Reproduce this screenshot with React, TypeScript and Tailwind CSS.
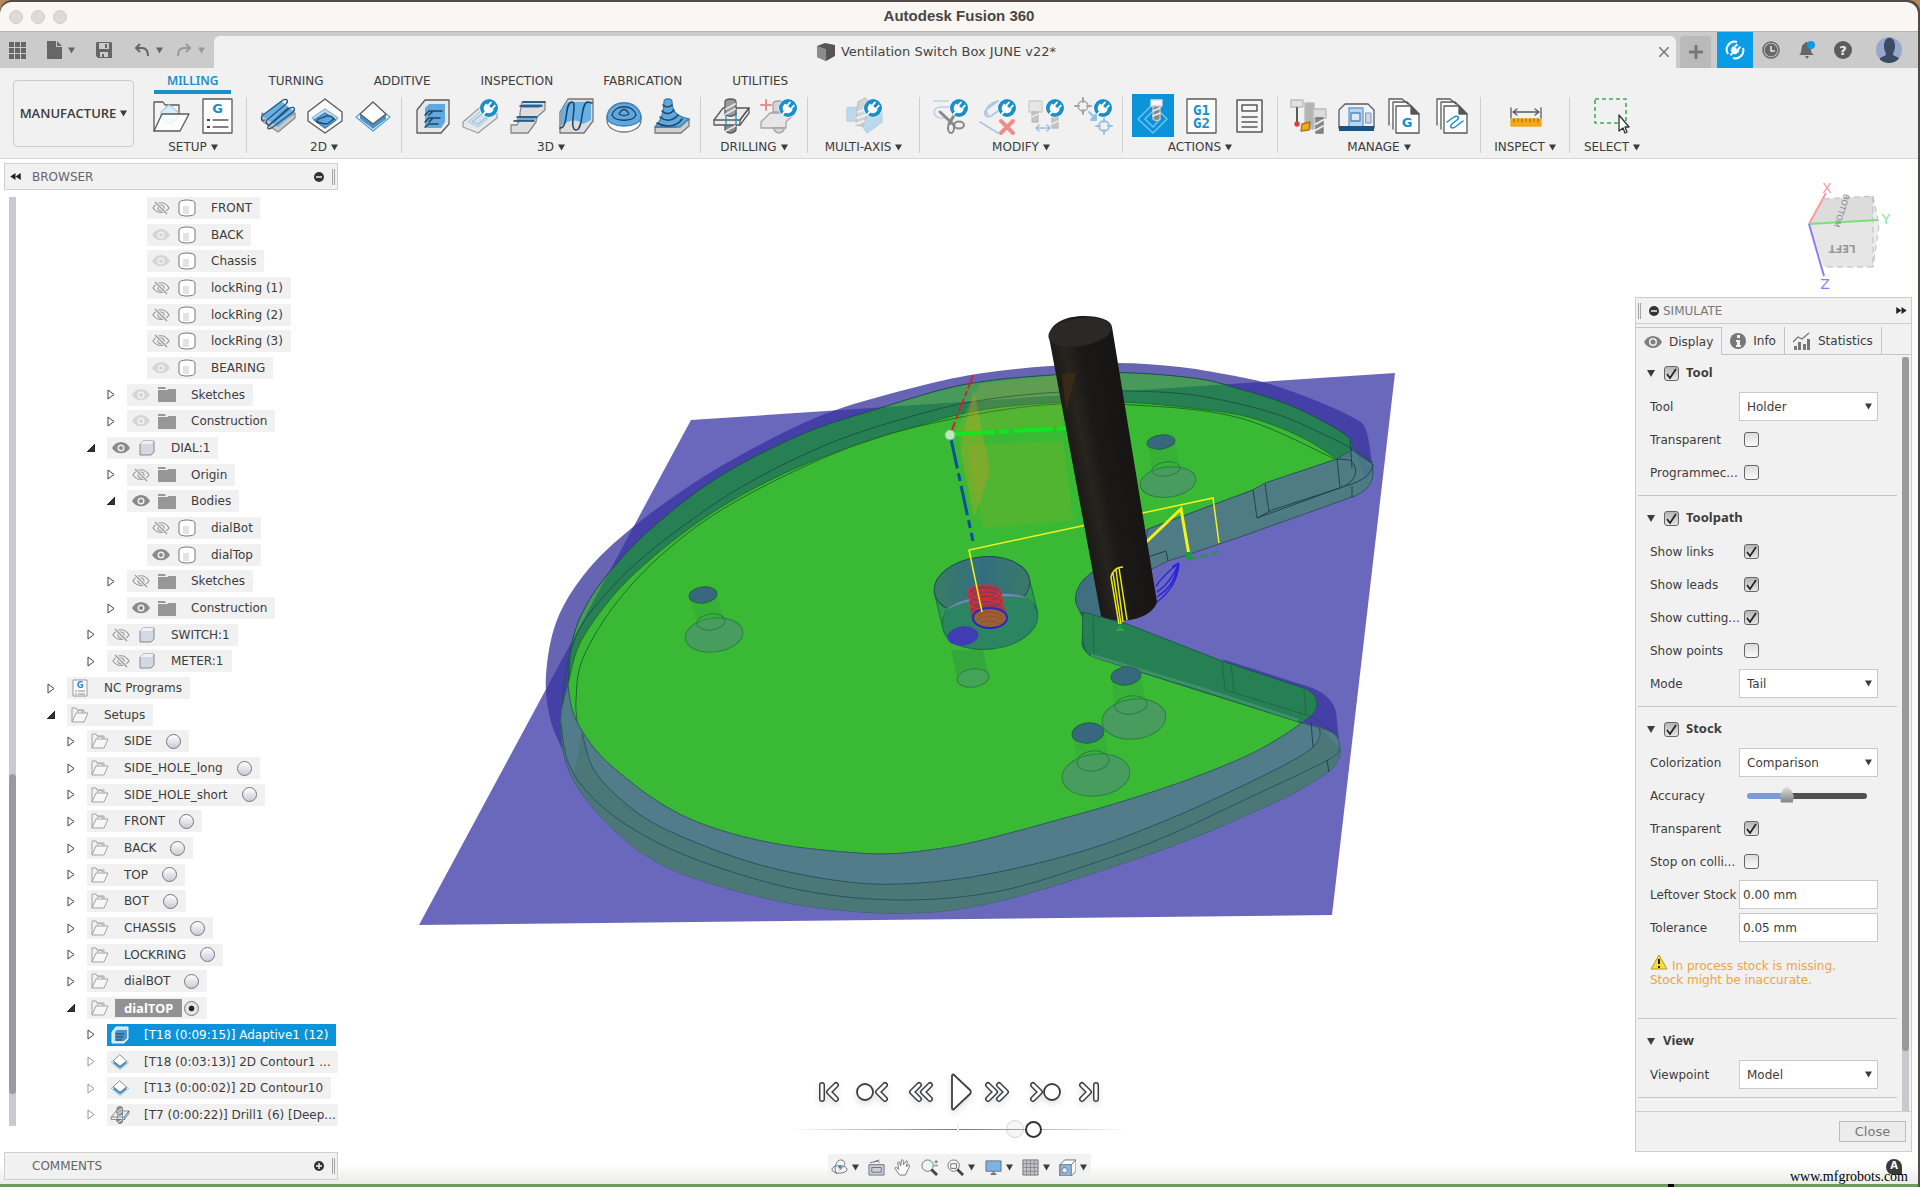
import React, { FC, ReactNode, useState } from "react";
import clsx from "clsx";

type EyeState = "on" | "dim" | "off";
type NodeIcon = "body" | "folder" | "component" | "nc" | "setup" | "adaptive" | "contour" | "drill";

interface TreeNode {
  label: string;
  level: number;
  icon: NodeIcon;
  arrow?: "open" | "closed" | "faint";
  eye?: EyeState;
  radio?: boolean;
  active?: boolean;
  selected?: boolean;
}

const treeNodes: TreeNode[] = [
  { label: "FRONT", level: 4, icon: "body", eye: "off" },
  { label: "BACK", level: 4, icon: "body", eye: "dim" },
  { label: "Chassis", level: 4, icon: "body", eye: "dim" },
  { label: "lockRing (1)", level: 4, icon: "body", eye: "off" },
  { label: "lockRing (2)", level: 4, icon: "body", eye: "off" },
  { label: "lockRing (3)", level: 4, icon: "body", eye: "off" },
  { label: "BEARING", level: 4, icon: "body", eye: "dim" },
  { label: "Sketches", level: 3, icon: "folder", eye: "dim", arrow: "closed" },
  { label: "Construction", level: 3, icon: "folder", eye: "dim", arrow: "closed" },
  { label: "DIAL:1", level: 2, icon: "component", eye: "on", arrow: "open" },
  { label: "Origin", level: 3, icon: "folder", eye: "off", arrow: "closed" },
  { label: "Bodies", level: 3, icon: "folder", eye: "on", arrow: "open" },
  { label: "dialBot", level: 4, icon: "body", eye: "off" },
  { label: "dialTop", level: 4, icon: "body", eye: "on" },
  { label: "Sketches", level: 3, icon: "folder", eye: "off", arrow: "closed" },
  { label: "Construction", level: 3, icon: "folder", eye: "on", arrow: "closed" },
  { label: "SWITCH:1", level: 2, icon: "component", eye: "off", arrow: "closed" },
  { label: "METER:1", level: 2, icon: "component", eye: "off", arrow: "closed" },
  { label: "NC Programs", level: 0, icon: "nc", arrow: "closed" },
  { label: "Setups", level: 0, icon: "setup", arrow: "open" },
  { label: "SIDE", level: 1, icon: "setup", arrow: "closed", radio: true },
  { label: "SIDE_HOLE_long", level: 1, icon: "setup", arrow: "closed", radio: true },
  { label: "SIDE_HOLE_short", level: 1, icon: "setup", arrow: "closed", radio: true },
  { label: "FRONT", level: 1, icon: "setup", arrow: "closed", radio: true },
  { label: "BACK", level: 1, icon: "setup", arrow: "closed", radio: true },
  { label: "TOP", level: 1, icon: "setup", arrow: "closed", radio: true },
  { label: "BOT", level: 1, icon: "setup", arrow: "closed", radio: true },
  { label: "CHASSIS", level: 1, icon: "setup", arrow: "closed", radio: true },
  { label: "LOCKRING", level: 1, icon: "setup", arrow: "closed", radio: true },
  { label: "dialBOT", level: 1, icon: "setup", arrow: "closed", radio: true },
  { label: "dialTOP", level: 1, icon: "setup", arrow: "open", radio: true, active: true },
  { label: "[T18 (0:09:15)] Adaptive1 (12)", level: 2, icon: "adaptive", arrow: "closed", selected: true },
  { label: "[T18 (0:03:13)] 2D Contour1 ...", level: 2, icon: "contour", arrow: "faint" },
  { label: "[T13 (0:00:02)] 2D Contour10", level: 2, icon: "contour", arrow: "faint" },
  { label: "[T7 (0:00:22)] Drill1 (6) [Deep...", level: 2, icon: "drill", arrow: "faint" },
];

const indents = ["pl-[40px]", "pl-[60px]", "pl-[80px]", "pl-[100px]", "pl-[120px]"];

const Caret: FC<{ className?: string }> = ({ className }) => (
  <svg viewBox="0 0 8 7" className={clsx("h-[7px] w-2 shrink-0", className)} fill="currentColor">
    <path d="M0 0h8L4 7z" />
  </svg>
);

/* ---------- ribbon icons, all on a 40x40 grid ---------- */

const Ico: FC<{ children: ReactNode; className?: string }> = ({ children, className }) => (
  <svg viewBox="0 0 40 40" className={className ?? "size-10"} fill="none" stroke="#5a5a5a" strokeWidth="1.3" strokeLinejoin="round" strokeLinecap="round">
    {children}
  </svg>
);

const Plug = ({ x = 29, y = 12 }: { x?: number; y?: number }) => (
  <g transform={`translate(${x} ${y})`} stroke="none">
    <circle r="9.5" fill="#fff" />
    <circle r="9" fill="#1a8fca" />
    <g transform="translate(-1 1) rotate(40)">
      <path d="M-5-3H5v2a5 5 0 0 1-10 0z" fill="#fff" />
      <path d="M-2-3v-4M3-3v-4M0 3v4" stroke="#fff" strokeWidth="1.8" />
    </g>
  </g>
);

const SetupIcon = () => (
  <Ico>
    <path d="M4 35V6h9l2 3h14v9" fill="#f4f4f4" />
    <path d="M11 16l8-7 9 7v5l-8 7-9-6z" fill="#d9edf9" stroke="#a9cbe0" />
    <path d="M4 35l8-17h27l-9 17z" fill="#fff" fillOpacity=".75" />
  </Ico>
);

const NcIcon = () => (
  <Ico>
    <rect x="5" y="3" width="29" height="34" fill="#fff" />
    <text x="19.5" y="17" textAnchor="middle" fontSize="13" fontWeight="700" fontFamily="DejaVu Sans" fill="#1a8fca" stroke="none">G</text>
    <path d="M15 24h15M15 31h15" />
    <path d="M9 23h3v2H9zM9 30h3v2H9z" fill="#444" stroke="none" />
  </Ico>
);

const FaceIcon = () => (
  <Ico>
    <path d="M5 25l16 11 17-14v-5L21 28 5 17z" fill="#c9c9c9" stroke="#8a8a8a" />
    <path d="M5 20L24 5l14 11-17 15z" fill="#67b0e6" stroke="none" />
    <path d="M8 24c-5 2-4-4-2-5L26 4c4-2 6 1 3 4L10 24c-2 3 1 6 4 4L33 12c4-2 6 1 3 4L16 31c-4 3-7 2-4-2L31 12" stroke="#2b5577" />
  </Ico>
);

const PocketIcon = () => (
  <Ico>
    <path d="M20 3l17 13v9L20 37 3 25v-9z" fill="#fafafa" />
    <path d="M20 13l13 9-13 10L7 22z" fill="#c9dff0" stroke="#7db8e0" />
    <path d="M20 17l11 7-11 8-11-8z" fill="#5ba6dd" stroke="#3a7fb5" />
    <path d="M12 26c0-5 6-3 9-6 5-1 8 2 8 3-3 1-4 5-9 5z" stroke="#20435f" />
  </Ico>
);

const ContourIcon: FC<{ className?: string }> = ({ className }) => (
  <Ico className={className}>
    <path d="M3 21l17 14 17-14-4-3-13 10L7 18z" fill="#fff" stroke="#4aa0dc" />
    <path d="M7 18v5l13 10 13-10v-5L20 28z" fill="#4d90c6" stroke="none" />
    <path d="M20 6l13 12-13 10L7 18z" fill="#fff" />
  </Ico>
);

const AdaptiveIcon: FC<{ className?: string }> = ({ className }) => (
  <Ico className={className}>
    <path d="M5 14L13 4h24v24l-8 9H5z" fill="#e8e8e8" />
    <path d="M13 12l4-4h16v18l-4 6H13z" fill="#5fa9e0" stroke="none" />
    <path d="M13 19l4-4h13M13 26l4-4h11M13 31l4-3h9M17 19l4-4M17 26l4-4" stroke="#20435f" strokeWidth="1.5" />
  </Ico>
);

const PocketClearIcon = () => (
  <Ico>
    <g opacity=".55">
      <path d="M3 26L24 8l13 9v5L18 37 3 31z" fill="#e4e4e4" />
      <path d="M8 26l15-13 10 5-15 13z" fill="#bcd9ef" stroke="#8ab7d9" />
      <path d="M12 26l10-8 6 2-10 8z" stroke="#6a9cc2" />
    </g>
    <Plug />
  </Ico>
);

const HorizontalIcon = () => (
  <Ico>
    <path d="M14 6h23v8l-8 7-1 5-8 11H3v-8h6l3-6V17z" fill="#dedede" stroke="#888" />
    <path d="M15 8h20l-4 4H12zM10 20h20l-4 5H8zM5 29h18" fill="#67b0e6" stroke="none" />
    <path d="M15 6h22M12 10h22M9 21h20M6 25h20" stroke="#20435f" strokeWidth="1.5" />
  </Ico>
);

const ParallelIcon = () => (
  <Ico>
    <path d="M4 16L12 3h25v22l-9 12H4z" fill="#dcdcdc" stroke="#777" />
    <path d="M5 14l7-8h23v18l-8 4C20 22 12 24 5 30z" fill="#67b0e6" stroke="none" />
    <path d="M4 32c9 0 4-26 12-26 6 0-4 28 4 28 8 0 4-28 12-28l4 1" stroke="#20435f" strokeWidth="1.5" />
  </Ico>
);

const ScallopIcon = () => (
  <Ico>
    <path d="M3 20v4c0 16 34 16 34 0v-4z" fill="#fafafa" stroke="#777" />
    <path d="M3 21C5 2 35 2 37 21c0 12-34 12-34 0z" fill="#5fa9e0" stroke="#3d7eb2" />
    <path d="M8 19c3-11 21-11 24 0-3 7-21 7-24 0zM15 18c3-6 7-6 10 0-3 2-7 2-10 0z" stroke="#20435f" />
  </Ico>
);

const SpiralIcon = () => (
  <Ico>
    <path d="M3 31h21l13-8v7l-8 7H3z" fill="#d0d0d0" stroke="#777" />
    <path d="M12 6c0-4 8-4 8 0 0 8 3 14 17 17l-9 8H3c6-6 9-14 9-25z" fill="#5fa9e0" stroke="#3d7eb2" />
    <path d="M11 9c3 3 7 2 9 0M10 15c4 4 9 3 12-1M8 21c6 5 13 4 18-2M5 27c8 5 20 4 25-4" stroke="#20435f" strokeWidth="1.5" />
  </Ico>
);

const DrillIcon: FC<{ className?: string }> = ({ className }) => (
  <Ico className={className}>
    <path d="M14 28h11v6c-3 4-8 4-11 0z" fill="#8d8d8d" />
    <path d="M3 24l9-12h26L29 24v5H3z" fill="#ececec" />
    <path d="M3 24h26l9-12v5l-9 12" />
    <path d="M15 17v12M25 17v12" stroke="#1a8fca" />
    <path d="M14 6c0-4 11-4 11 0v12c-3 3-8 3-11 0z" fill="#9a9a9a" />
    <path d="M15 13l9-5M15 18l9-5M15 35l9-5" stroke="#e6e6e6" strokeWidth="2" />
  </Ico>
);

const HoleIcon = () => (
  <Ico>
    <g opacity=".5">
      <path d="M2 26l9-9h25l-9 9v6H2z" fill="#dcdcdc" />
      <path d="M14 8c0-4 11-4 11 0v8H14zM15 32h10v2c-3 4-7 4-10 0z" fill="#bbb" />
      <path d="M7 4v10M2 9h10" stroke="#e8302a" strokeWidth="2" />
    </g>
    <Plug />
  </Ico>
);

const MultiAxisIcon = () => (
  <Ico>
    <g opacity=".55">
      <path d="M2 12l14-1 9 8 12-2v9L22 37l-8-12H2z" fill="#8ec5ec" stroke="#8fb6d2" />
      <path d="M13 6l7-4 6 6-8 22-7-1z" fill="#bbb" stroke="#999" />
      <path d="M13 16l9-3M12 22l9-3M11 28l8-3" stroke="#f0f0f0" strokeWidth="2" />
    </g>
    <Plug x={28} />
  </Ico>
);

const TrimIcon = () => (
  <Ico>
    <g opacity=".6">
      <path d="M4 5h14M16 22h-5C2 22 2 10 11 11h9" stroke="#9dbbd8" strokeWidth="1.6" />
      <path d="M10 16l14 13M26 16l-7 12" stroke="#444" strokeWidth="3" />
      <ellipse cx="21" cy="32" rx="3" ry="5" stroke="#444" strokeWidth="2" />
      <ellipse cx="29" cy="29" rx="5" ry="3.5" stroke="#444" strokeWidth="2" />
    </g>
    <Plug x={29} />
  </Ico>
);

const DeletePassIcon = () => (
  <Ico>
    <g opacity=".5">
      <path d="M20 5L9 13c-5 5 0 10 4 7l7-5M20 5c-8 2-15 8-10 14M2 26l18 11" stroke="#6b9fd0" strokeWidth="1.8" />
      <path d="M23 25l12 12M35 25L23 37" stroke="#e8302a" strokeWidth="4" />
    </g>
    <Plug x={29} />
  </Ico>
);

const ReplaceToolIcon = () => (
  <Ico>
    <g opacity=".5">
      <path d="M3 5h13v11H3z" fill="#ddd" stroke="#aaa" />
      <path d="M6 16h6v10H6zM26 20h6v12h-6z" fill="#999" stroke="#888" />
      <path d="M6 21l6-3M26 28l6-3" stroke="#fff" />
      <path d="M10 32h14M13 29l-3 3 3 3M21 29l3 3-3 3" stroke="#3b8fd6" strokeWidth="1.5" />
    </g>
    <Plug x={29} />
  </Ico>
);

const PatternIcon = () => (
  <Ico>
    <g opacity=".5">
      <circle cx="9" cy="10" r="5" />
      <path d="M9 2v4M9 14v4M1 10h4M13 10h4" strokeWidth="2" />
      <path d="M15 16l6 6M22 24v-6l-5 6z" fill="#3b8fd6" stroke="#3b8fd6" strokeWidth="2" />
      <circle cx="30" cy="30" r="5" stroke="#3b8fd6" strokeWidth="1.8" />
      <path d="M30 22v4M30 34v4M22 30h4M34 30h4" stroke="#3b8fd6" strokeWidth="1.8" />
    </g>
    <Plug x={29} />
  </Ico>
);

const SimulateIcon = () => (
  <Ico>
    <path d="M19 9L5 23l15 14 14-14-6-6M19 16l-7 7 8 8 7-8" stroke="#6fc3f2" strokeWidth="1.5" />
    <path d="M18 4h11v6H18z" fill="#f7f7f7" stroke="#ddd" />
    <path d="M20 10h7v13c-2 2-5 2-7 0z" fill="#888" stroke="#ccc" />
    <path d="M20 15l7-3M20 20l7-3" stroke="#eee" strokeWidth="1.5" />
  </Ico>
);

const PostIcon = () => (
  <Ico>
    <rect x="6" y="3" width="29" height="34" fill="#fff" />
    <g fontSize="14" fontWeight="700" fontFamily="DejaVu Sans Mono" fill="#1a8fca" stroke="none" textAnchor="middle">
      <text x="20.5" y="19">G1</text>
      <text x="20.5" y="32">G2</text>
    </g>
  </Ico>
);

const SheetIcon = () => (
  <Ico>
    <path d="M8 4h25v32H8z" fill="#f6f6f6" strokeWidth="1.5" />
    <path d="M13 9h15v6H13zM13 21h15M13 26h15M13 31h15" strokeWidth="1.5" />
  </Ico>
);

const ToolLibIcon = () => (
  <Ico>
    <path d="M17 7h9v26h-9z" fill="#b5b5b5" stroke="#bbb" />
    <path d="M3 4h12v7H3z" fill="#e2e2e2" stroke="#bbb" />
    <path d="M9 12v14" strokeWidth="2" />
    <circle cx="9" cy="28" r="2" fill="#e23b3b" stroke="#e23b3b" />
    <path d="M14 28l8-2-1 8-8 1z" fill="#f5a81c" stroke="#a8761a" />
    <path d="M25 13h13v9H25z" fill="#dcdcdc" stroke="#bbb" />
    <path d="M28 22h7v15h-7z" fill="#888" stroke="#777" />
    <path d="M28 28l7-4M28 34l7-4" stroke="#eee" strokeWidth="2" />
  </Ico>
);

const MachineIcon = () => (
  <Ico>
    <path d="M3 14l6-6h23l6 6v18H3z" fill="#eef1f6" />
    <path d="M13 12h14v19H13z" fill="#b8d4f0" stroke="#6a9ccc" />
    <path d="M15 17h9v8h-9z" fill="#dbe9f7" stroke="#4d86ba" />
    <path d="M30 17h5v10h-5z" fill="#cfd8e6" stroke="#7a93b5" strokeWidth="1" />
    <path d="M3 30h35v5H3z" fill="#1d5380" stroke="none" />
  </Ico>
);

const Pages = ({ children }: { children: ReactNode }) => (
  <Ico>
    <path d="M5 29V3h13l6 5M9 33V6h14l6 6" fill="#fff" />
    <path d="M12 10h15l8 8v19H12z" fill="#fff" />
    <path d="M27 10v8h8z" fill="#555" />
    {children}
  </Ico>
);

const PostLibIcon = () => (
  <Pages>
    <text x="23" y="31" textAnchor="middle" fontSize="13" fontWeight="700" fontFamily="DejaVu Sans" fill="#1a8fca" stroke="none">G</text>
  </Pages>
);

const TemplateIcon = () => (
  <Pages>
    <path d="M15 26l7-5c4-2 6 1 3 3l-5 4c-3 3 0 5 3 3l8-6" stroke="#1a8fca" strokeWidth="1.5" />
  </Pages>
);

const MeasureIcon = () => (
  <Ico>
    <path d="M5 12v10M35 12v10M7 16h26M11 13l-4 3 4 3M29 13l4 3-4 3" />
    <path d="M5 23h30v7H5z" fill="#f5a81c" stroke="#f5a81c" />
    <path d="M8 23v3M12 23v2M16 23v3M20 23v2M24 23v3M28 23v2M32 23v3" stroke="#8a5b05" strokeWidth="1" />
  </Ico>
);

const SelectIcon = () => (
  <Ico>
    <path d="M2 3h31v24H2z" stroke="#39b05a" strokeWidth="1.6" strokeDasharray="4 3" strokeLinecap="butt" />
    <path d="M26 19v16l4-3 2 5 2-1-2-5h4z" fill="#fff" stroke="#333" />
  </Ico>
);

interface Group {
  name: string;
  icons: FC[];
  width: string;
}

const groups: Group[] = [
  { name: "SETUP", icons: [SetupIcon, NcIcon], width: "px-[5px]" },
  { name: "2D", icons: [FaceIcon, PocketIcon, ContourIcon], width: "px-[5px]" },
  { name: "3D", icons: [AdaptiveIcon, PocketClearIcon, HorizontalIcon, ParallelIcon, ScallopIcon, SpiralIcon], width: "px-[5px]" },
  { name: "DRILLING", icons: [DrillIcon, HoleIcon], width: "px-[5px]" },
  { name: "MULTI-AXIS", icons: [MultiAxisIcon], width: "w-[111px]" },
  { name: "MODIFY", icons: [TrimIcon, DeletePassIcon, ReplaceToolIcon, PatternIcon], width: "px-[5px]" },
  { name: "ACTIONS", icons: [SimulateIcon, PostIcon, SheetIcon], width: "px-[5px]" },
  { name: "MANAGE", icons: [ToolLibIcon, MachineIcon, PostLibIcon, TemplateIcon], width: "px-[5px]" },
  { name: "INSPECT", icons: [MeasureIcon], width: "w-[88px]" },
  { name: "SELECT", icons: [SelectIcon], width: "w-[84px]" },
];

const ribbonTabs = ["MILLING", "TURNING", "ADDITIVE", "INSPECTION", "FABRICATION", "UTILITIES"];

const TitleBar = () => (
  <header className="relative flex h-[30px] shrink-0 items-center justify-center rounded-t-xl border-b border-[#b9b7b5] bg-[#faf6f3]">
    <div className="absolute left-[9px] flex gap-2">
      {["Close window", "Minimize window", "Zoom window"].map(name => (
        <button key={name} aria-label={name} className="size-[14px] rounded-full border border-[#d2cecb] bg-[#dedad7]" />
      ))}
    </div>
    <h1 className="font-['Liberation_Sans',sans-serif] text-[15px] font-bold text-[#494644]">Autodesk Fusion 360</h1>
  </header>
);

const QuickBar = () => (
  <div className="flex h-9 shrink-0 bg-[#cbcbcb]">
    <div className="flex w-[214px] items-center pl-[9px] text-[#666]">
      <button aria-label="Data panel">
        <svg viewBox="0 0 17 17" className="size-[17px]" fill="currentColor">
          <path d="M0 0h5v5H0zM6 0h5v5H6zM12 0h5v5h-5zM0 6h5v5H0zM6 6h5v5H6zM12 6h5v5h-5zM0 12h5v5H0zM6 12h5v5H6zM12 12h5v5h-5z" />
        </svg>
      </button>
      <button aria-label="File" className="ml-5 flex items-center gap-1.5">
        <svg viewBox="0 0 16 18" className="h-[18px] w-4" fill="currentColor">
          <path d="M1 0h9v6h6v12H1zM11 0l5 5h-5z" />
        </svg>
        <Caret className="w-[7px]" />
      </button>
      <button aria-label="Save" className="ml-[21px]">
        <svg viewBox="0 0 16 16" className="size-4" fill="currentColor" fillRule="evenodd">
          <path d="M0 1l1-1h14l1 1v15H2l-2-2zM3 1v6h10V1zM4 10v5h2v-3h2v3h4v-5zM9 2h2v4H9z" />
        </svg>
      </button>
      <button aria-label="Undo" className="ml-[22px] flex items-center gap-1.5">
        <svg viewBox="0 0 16 14" className="h-[14px] w-4" fill="none" stroke="currentColor" strokeWidth="2">
          <path d="M6 1L2 5l4 4M2 5h6c4 0 6 3 6 8" />
        </svg>
        <Caret className="w-[7px]" />
      </button>
      <button aria-label="Redo" className="ml-[13px] flex items-center gap-1.5 text-[#999]">
        <svg viewBox="0 0 16 14" className="h-[14px] w-4" fill="none" stroke="currentColor" strokeWidth="2">
          <path d="M10 1l4 4-4 4M14 5H8c-4 0-6 3-6 8" />
        </svg>
        <Caret className="w-[7px]" />
      </button>
    </div>
    <div className="mt-1 flex flex-1 items-center rounded-t-md bg-[#f1f1f1] pr-[7px]">
      <div className="flex flex-1 items-center justify-center gap-1.5 text-[13px] text-[#444]">
        <svg viewBox="0 0 18 18" className="size-[18px]">
          <path d="M0 3l8-3 10 2v11l-9 5-9-4z" fill="#555" />
          <path d="M0 3l9 3v12l-9-4z" fill="#8c8c8c" />
        </svg>
        Ventilation Switch Box JUNE v22*
      </div>
      <button aria-label="Close document">
        <svg viewBox="0 0 10 10" className="size-[10px]" stroke="#777" strokeWidth="1.5"><path d="M0 0l10 10M10 0L0 10" /></svg>
      </button>
    </div>
    <button aria-label="New design" className="mx-1 mt-1 flex w-[31px] items-center justify-center rounded-t bg-[#bababa]">
      <svg viewBox="0 0 14 14" className="size-[14px]" stroke="#777" strokeWidth="3"><path d="M7 0v14M0 7h14" /></svg>
    </button>
    <button aria-label="Extensions" className="ml-0.5 flex w-9 items-center justify-center bg-[#0a9ce6]">
      <svg viewBox="0 0 20 20" className="size-5" fill="none" stroke="#fff" strokeWidth="2">
        <path d="M12 2a8 8 0 0 0-9 12M18 8a8 8 0 0 1-10 10" />
        <g transform="translate(10 10) rotate(40)">
          <path d="M-4-2H4v2a4 4 0 0 1-8 0z" fill="#fff" stroke="none" />
          <path d="M-2-2v-4M2-2v-4M0 3v4" />
        </g>
      </svg>
    </button>
    <div className="flex w-[165px] items-center pl-[9px] text-[#666]">
      <button aria-label="Job status" className="w-9">
        <svg viewBox="0 0 18 18" className="size-[18px]" fill="none" stroke="currentColor">
          <circle cx="9" cy="9" r="8" strokeWidth="1.5" />
          <circle cx="9" cy="9" r="6" fill="currentColor" />
          <path d="M9 5v5h4" stroke="#e6e6e6" strokeWidth="1.5" />
        </svg>
      </button>
      <button aria-label="Notifications" className="w-9">
        <svg viewBox="0 0 18 18" className="size-[18px]" fill="currentColor">
          <path d="M1 14c3-2 2-6 3-9 1-2 3-3 4-4h1c3 1 4 3 4 6s0 5 3 7zM7 15h4l-2 3z" />
          <circle cx="13" cy="4" r="4" fill="#0a9ce6" />
        </svg>
      </button>
      <button aria-label="Help" className="flex size-[18px] items-center justify-center rounded-full bg-[#5c5c5c] text-[13px] leading-none font-bold text-[#eee]">?</button>
      <button aria-label="Account" className="ml-6 size-[26px] overflow-hidden rounded-full">
        <svg viewBox="0 0 26 26">
          <path d="M0 0h26v26H0z" fill="#95a9cb" />
          <path d="M8 9c0-11 11-11 11 0 0 5-2 6-2 9l6 3v5H4v-5l6-3c0-3-2-4-2-9z" fill="#3c4a63" />
        </svg>
      </button>
    </div>
  </div>
);

const Ribbon = () => {
  const [tab, setTab] = useState("MILLING");

  return (
    <div className="flex h-[91px] shrink-0 border-b border-[#d5d5d5] bg-[#f1f1f1] pl-[13px]">
      <button className="mt-3 mr-[6px] flex h-[67px] w-[121px] items-center justify-center gap-1 rounded border border-[#ccc] font-['Open_Sans',sans-serif] text-[13px] font-semibold">
        MANUFACTURE <Caret className="w-[7px]" />
      </button>
      <div className="flex flex-col">
        <nav className="flex h-[26px] gap-6 pl-[14px]">
          {ribbonTabs.map(name => (
            <button
              key={name}
              onClick={() => setTab(name)}
              className={clsx(
                "border-b-4 px-[13px] pt-[3px]",
                name === tab ? "border-[#1a8fca] font-['Noto_Sans',sans-serif] font-semibold text-[#1a8fca]" : "border-transparent"
              )}
            >
              {name}
            </button>
          ))}
        </nav>
        <div className="flex flex-1">
          {groups.map(group => (
            <div key={group.name} className={clsx("relative flex flex-col items-center", group.name !== "SELECT" && "mr-px", group.width)}>
              <div className="flex">
                {group.icons.map((Icon, i) => (
                  <button key={i} aria-label={`${group.name} ${i + 1}`} className="flex h-[43px] w-12 items-center justify-center pl-0.5">
                    <span className={clsx(Icon === SimulateIcon && "flex h-[43px] w-[42px] items-center justify-center bg-[#0a93d8]")}>
                      <Icon />
                    </span>
                  </button>
                ))}
              </div>
              <button className="flex h-5 items-center gap-1">{group.name}<Caret className="w-[7px]" /></button>
              {group.name !== "SELECT" && <i className="absolute top-[3px] -right-px h-14 w-px bg-[#cfcfcf]" />}
            </div>
          ))}
        </div>
      </div>
    </div>
  );
};

/* ---------- browser tree ---------- */

const Eye: FC<{ state: EyeState }> = ({ state }) => (
  <svg viewBox="0 0 18 14" className="h-[14px] w-[18px]" fill="none">
    {state === "off" ? (
      <g stroke="#9a9a9a" strokeWidth="1.2">
        <path d="M1 7c4-7 12-7 16 0-4 6-12 6-16 0z" />
        <circle cx="9" cy="7" r="3" />
        <path d="M3 1l12 12" stroke="#f1f1f1" strokeWidth="3" />
        <path d="M3 1l12 12" />
      </g>
    ) : (
      <g fill={state === "on" ? "#8a8a8a" : "#d6d6d6"}>
        <path d="M0 7c4-8 14-8 18 0-4 7-14 7-18 0z" />
        <circle cx="9" cy="7" r="3.5" fill="#f1f1f1" />
        <circle cx="9" cy="7" r="2" />
      </g>
    )}
  </svg>
);

const RowIcon: FC<{ icon: NodeIcon }> = ({ icon }) => {
  switch (icon) {
    case "body":
      return (
        <svg viewBox="0 0 18 18" className="size-[18px]">
          <path d="M1 4c0-4 16-4 16 0v10c0 4-16 4-16 0z" fill="#fff" stroke="#777" />
          <path d="M5 7h6v8H5z" fill="#e3e3e6" />
        </svg>
      );
    case "folder":
      return (
        <svg viewBox="0 0 18 15" className="h-[15px] w-[18px]" fill="#979797">
          <path d="M0 0h7l1 2H0zM0 3h9l2-1h7v13H0z" />
        </svg>
      );
    case "component":
      return (
        <svg viewBox="0 0 16 16" className="size-4">
          <path d="M1 4l3-3h11v11l-3 3H1z" fill="#d3d8e4" stroke="#888" />
          <path d="M1 4l3-3h11l-3 3z" fill="#eef1f7" />
        </svg>
      );
    case "nc":
      return (
        <svg viewBox="0 0 16 18" className="h-[18px] w-4">
          <path d="M1 1h14v16H1z" fill="#fbfbfb" stroke="#999" />
          <text x="8" y="9" textAnchor="middle" fontSize="8" fontWeight="700" fill="#1a8fca">G</text>
          <path d="M3 12h2m1 0h7M3 15h2m1 0h7" stroke="#888" />
        </svg>
      );
    case "setup":
      return (
        <svg viewBox="0 0 18 16" className="h-4 w-[18px]" fill="none" stroke="#a3a3a3">
          <path d="M1 15V1h4l1 2h7v3M6 5l3-2 3 2" />
          <path d="M1 15L5 6h12l-4 9z" fill="#f7f7f7" />
        </svg>
      );
    case "adaptive":
      return (
        <svg viewBox="0 0 18 18" className="size-[18px]">
          <path d="M1 6l4-5h12v12l-4 4H1z" fill="#cfe6f6" stroke="#e8f4fb" />
          <path d="M4 6l2-2h10v8l-3 3H4z" fill="#4d93c9" />
          <path d="M5 8h8M5 11h7M5 14h6" stroke="#1c4563" strokeWidth="1.2" />
        </svg>
      );
    case "contour":
      return <ContourIcon className="size-5" />;
    default:
      return <DrillIcon className="size-5" />;
  }
};

const TreeRow: FC<{ node: TreeNode }> = ({ node }) => (
  <li className={clsx("flex h-[22px] items-center", indents[node.level])}>
    <span className="mr-2 flex w-4 shrink-0 justify-center">
      {node.arrow === "open" && (
        <svg viewBox="0 0 8 8" className="size-2"><path d="M8 0v8H0z" fill="#333" stroke="#222" /></svg>
      )}
      {(node.arrow === "closed" || node.arrow === "faint") && (
        <svg viewBox="0 0 8 11" className="h-[11px] w-2">
          <path d="M1 1l6 4.500L1 10z" fill="#fff" stroke={node.arrow === "faint" ? "#999" : "#444"} strokeLinejoin="round" />
        </svg>
      )}
    </span>
    <span className={clsx("flex h-full items-center whitespace-nowrap", node.selected ? "bg-[#0a93d8] pr-2 text-white" : "bg-[#f1f1f1]", !node.radio && !node.selected && "pr-2")}>
      {node.eye && <button aria-label={`Toggle ${node.label}`} className="flex w-[27px] justify-center"><Eye state={node.eye} /></button>}
      <span className="flex w-[26px] shrink-0 justify-center"><RowIcon icon={node.icon} /></span>
      {node.radio ? (
        <label className="flex h-full items-center pr-2">
          <span className={clsx(node.active ? "mx-0.5 bg-[#929292] px-[9px] py-px font-['Noto_Sans',sans-serif] text-[13px] leading-4 font-bold text-white" : "mr-3.5 ml-[11px]")}>{node.label}</span>
          <input
            type="radio"
            name="active-setup"
            defaultChecked={node.active}
            className="size-[15px] appearance-none rounded-full border border-[#777] bg-linear-to-b from-white to-[#c9ccd8] checked:bg-radial checked:from-[#222] checked:from-25% checked:to-[#e4e4e8] checked:to-35%"
          />
        </label>
      ) : (
        <span className="ml-[11px]">{node.label}</span>
      )}
    </span>
  </li>
);

const PanelGrip = () => <span className="h-4 w-[3px] border-x border-[#a5a5a5]" />;

const RoundMark: FC<{ plus?: boolean }> = ({ plus }) => (
  <svg viewBox="0 0 10 10" className="size-[10px]">
    <circle cx="5" cy="5" r="5" fill="#333" />
    <path d={plus ? "M2 5h6M5 2v6" : "M2 5h6"} stroke="#f1f1f1" strokeWidth="1.5" />
  </svg>
);

const BrowserPanel = () => (
  <aside className="flex w-[338px] flex-col pt-1 pb-1 pl-1">
    <div className="flex h-[27px] shrink-0 items-center border border-[#d0d0d0] bg-[#f1f1f1] pr-0.5 pl-[5px] text-[#666]">
      <svg viewBox="0 0 12 8" className="h-[7px] w-[11px]"><path d="M6 0v8L0 4zM12 0v8L6 4z" fill="#222" /></svg>
      <span className="ml-[11px] flex-1">BROWSER</span>
      <span className="mr-2 flex"><RoundMark /></span>
      <PanelGrip />
    </div>
    <div className="mt-[7px] mb-[26px] flex min-h-0 flex-1 pl-[5px]">
      <div className="flex w-[7px] shrink-0 flex-col bg-[#c9cacf]">
        <div className="mt-[577px] h-[320px] rounded-full bg-[#9b9aa0]" />
      </div>
      <ul className="-ml-4 flex min-w-0 flex-1 flex-col justify-between overflow-x-clip pl-[3px]">
        {treeNodes.map((node, i) => <TreeRow key={i} node={node} />)}
      </ul>
    </div>
    <div className="flex h-7 shrink-0 items-center border border-[#d0d0d0] bg-[#f1f1f1] pr-0.5 pl-[27px] text-[#666]">
      <span className="flex-1">COMMENTS</span>
      <span className="mr-2 flex"><RoundMark plus /></span>
      <PanelGrip />
    </div>
  </aside>
);

/* ---------- simulate panel ---------- */

const Check: FC<{ id: string; checked?: boolean; label?: string }> = ({ id, checked, label }) => (
  <span className="relative flex size-[15px]">
    <input
      id={id}
      type="checkbox"
      aria-label={label}
      defaultChecked={checked}
      className="peer size-[15px] appearance-none rounded-[3px] border border-[#666] bg-linear-to-b from-[#dcdcdc] to-[#fafafa] checked:from-[#b5b5b5] checked:to-[#e6e6e6]"
    />
    <svg viewBox="0 0 15 15" className="pointer-events-none absolute inset-0 hidden size-[15px] peer-checked:block" fill="none" stroke="#222" strokeWidth="1.7">
      <path d="M3 8l3 4 6-9" />
    </svg>
  </span>
);

const Row: FC<{ id: string; label: string; children: ReactNode }> = ({ id, label, children }) => (
  <div className="flex h-[33px] items-center pl-3">
    <label htmlFor={id} className="w-[89px] whitespace-nowrap">{label}</label>
    {children}
  </div>
);

const CheckRow: FC<{ id: string; label: string; checked?: boolean }> = ({ id, label, checked }) => (
  <Row id={id} label={label}>
    <span className="ml-[5px]"><Check id={id} checked={checked} /></span>
  </Row>
);

const SelectRow: FC<{ id: string; label: string; value: string }> = ({ id, label, value }) => (
  <Row id={id} label={label}>
    <div className="relative w-[139px]">
      <select id={id} className="block h-[29px] w-full appearance-none border border-[#c9c9c9] bg-white px-[7px]">
        <option>{value}</option>
      </select>
      <Caret className="pointer-events-none absolute top-[11px] right-[6px] w-[7px]" />
    </div>
  </Row>
);

const TextRow: FC<{ id: string; label: string; value: string }> = ({ id, label, value }) => (
  <Row id={id} label={label}>
    <input id={id} type="text" defaultValue={value} className="h-[29px] w-[139px] border border-[#c9c9c9] bg-white px-[3px]" />
  </Row>
);

const Section: FC<{ title: string; toggle?: boolean; children: ReactNode }> = ({ title, toggle, children }) => (
  <section className="border-b border-[#c4c4c4] pt-[5px] pb-[6px] first:pt-px">
    <h2 className="flex h-[34px] items-center pl-[8px] font-['Noto_Sans',sans-serif] text-[13px] font-bold">
      <Caret className="w-[10px]" />
      {toggle && <span className="ml-2"><Check id={`sim-${title}`} checked label={title} /></span>}
      <span className="ml-[7px]">{title}</span>
    </h2>
    {children}
  </section>
);

const SimulatePanel = () => {
  const [tab, setTab] = useState("Display");
  const tabs = [
    {
      name: "Display",
      icon: (
        <svg viewBox="0 0 18 14" className="h-[14px] w-[18px]" fill="#808080">
          <path d="M0 7c4-8 14-8 18 0-4 8-14 8-18 0z" />
          <circle cx="9" cy="7" r="4" fill="#f1f1f1" /><circle cx="9" cy="7" r="2.5" />
        </svg>
      ),
    },
    {
      name: "Info",
      icon: (
        <svg viewBox="0 0 16 16" className="size-4">
          <circle cx="8" cy="8" r="8" fill="#777" />
          <path d="M7 2h3v3H7zM6 7h4v5h1v2H6v-2h1V9H6z" fill="#f1f1f1" />
        </svg>
      ),
    },
    {
      name: "Statistics",
      icon: (
        <svg viewBox="0 0 18 18" className="size-[18px]">
          <path d="M1 14h3v4H1zM5 10h3v8H5zM10 12h3v6h-3zM14 7h3v11h-3z" fill="#777" />
          <path d="M0 10l5-5 4 2 7-6" fill="none" stroke="#777" strokeWidth="1.3" />
        </svg>
      ),
    },
  ];

  return (
    <aside className="mt-[138px] mr-[6px] mb-8 flex w-[277px] flex-col border border-[#cdcdcd] bg-[#f1f1f1]">
      <div className="flex h-[26px] shrink-0 items-center border-b border-[#cdcdcd] pr-1 pl-0.5 text-[#777]">
        <PanelGrip />
        <span className="mr-1 ml-2 flex"><RoundMark /></span>
        <span className="flex-1">SIMULATE</span>
        <svg viewBox="0 0 12 8" className="h-[7px] w-[11px]"><path d="M0 0v8l6-4zM6 0v8l6-4z" fill="#222" /></svg>
      </div>
      <div className="flex h-[31px] shrink-0 pt-[3px]">
        {tabs.map(t => (
          <button
            key={t.name}
            onClick={() => setTab(t.name)}
            className={clsx(
              "flex items-center gap-[7px] border-r border-[#c4c4c4] px-2 whitespace-nowrap",
              t.name === tab ? "border-t" : "border-b"
            )}
          >
            {t.icon}{t.name}
          </button>
        ))}
        <div className="flex-1 border-b border-[#c4c4c4]" />
      </div>
      <div className="flex min-h-0 flex-1">
        <div className="flex-1 overflow-hidden pl-[2px]">
          <Section title="Tool" toggle>
            <SelectRow id="tool" label="Tool" value="Holder" />
            <CheckRow id="tool-transparent" label="Transparent" />
            <CheckRow id="programmed" label="Programmec..." />
          </Section>
          <Section title="Toolpath" toggle>
            <CheckRow id="links" label="Show links" checked />
            <CheckRow id="leads" label="Show leads" checked />
            <CheckRow id="cutting" label="Show cutting..." checked />
            <CheckRow id="points" label="Show points" />
            <SelectRow id="mode" label="Mode" value="Tail" />
          </Section>
          <Section title="Stock" toggle>
            <SelectRow id="colorization" label="Colorization" value="Comparison" />
            <Row id="accuracy" label="Accuracy">
              <input
                id="accuracy"
                type="range"
                defaultValue={31}
                className="ml-2 h-4 w-[120px] appearance-none bg-transparent [&::-webkit-slider-runnable-track]:h-[6px] [&::-webkit-slider-runnable-track]:rounded-full [&::-webkit-slider-runnable-track]:bg-linear-to-r [&::-webkit-slider-runnable-track]:from-[#7c9bd6] [&::-webkit-slider-runnable-track]:from-35% [&::-webkit-slider-runnable-track]:to-[#505050] [&::-webkit-slider-runnable-track]:to-35% [&::-webkit-slider-thumb]:-mt-[6px] [&::-webkit-slider-thumb]:h-4 [&::-webkit-slider-thumb]:w-[14px] [&::-webkit-slider-thumb]:appearance-none [&::-webkit-slider-thumb]:bg-linear-to-b [&::-webkit-slider-thumb]:from-[#e0e0e0] [&::-webkit-slider-thumb]:to-[#808080] [&::-webkit-slider-thumb]:[clip-path:polygon(50%_0,80%_22%,100%_60%,92%_100%,8%_100%,0_60%,20%_22%)]"
              />
            </Row>
            <CheckRow id="stock-transparent" label="Transparent" checked />
            <CheckRow id="collision" label="Stop on colli..." />
            <TextRow id="leftover" label="Leftover Stock" value="0.00 mm" />
            <TextRow id="tolerance" label="Tolerance" value="0.05 mm" />
            <p className="h-[68px] pt-2.5 pl-3 leading-[14px] text-[#f0a43c]">
              <svg viewBox="0 0 18 16" className="mr-1 inline-block h-4 w-[18px] align-baseline">
                <path d="M9 1l8 14H1z" fill="#f7dd3a" stroke="#b39b2b" strokeLinejoin="round" />
                <path d="M9 5v5M9 12v2" stroke="#222" strokeWidth="2" />
              </svg>
              In process stock is missing.<br />Stock might be inaccurate.
            </p>
          </Section>
          <Section title="View">
            <SelectRow id="viewpoint" label="Viewpoint" value="Model" />
          </Section>
        </div>
        <div className="mt-0.5 mr-0.5 ml-[5px] w-[7px] bg-[#c9c9cb]">
          <div className="h-[92%] rounded-full bg-[#999]" />
        </div>
      </div>
      <div className="flex h-10 shrink-0 items-center justify-end border-t border-[#cdcdcd] pr-[5px]">
        <button className="h-[21px] w-[67px] border border-[#bdbdbd] bg-[#ececec] text-[13px] text-[#777]">Close</button>
      </div>
    </aside>
  );
};

/* ---------- 3D canvas ---------- */

type Pt = [number, number];

// Catmull-Rom through the points, written out as cubic segments
const curve = (pts: Pt[], start = "M") => {
  let d = `${start}${pts[0][0]} ${pts[0][1]}`;
  for (let i = 0; i < pts.length - 1; i++) {
    const p0 = pts[i - 1] ?? pts[i];
    const p1 = pts[i];
    const p2 = pts[i + 1];
    const p3 = pts[i + 2] ?? p2;
    d += `C${p1[0] + (p2[0] - p0[0]) / 6} ${p1[1] + (p2[1] - p0[1]) / 6} ${p2[0] - (p3[0] - p1[0]) / 6} ${p2[1] - (p3[1] - p1[1]) / 6} ${p2[0]} ${p2[1]}`;
  }
  return d;
};

const stockOuter: Pt[] = [[563, 751], [550, 718], [546, 675], [557, 620], [587, 571], [633, 527], [700, 479], [767, 441], [833, 411], [920, 386], [983, 373], [1050, 366], [1117, 363], [1180, 367], [1240, 377], [1273, 385], [1317, 401], [1352, 417], [1366, 430], [1373, 470]];
const rimOuter: Pt[] = [[568, 690], [572, 642], [587, 604], [613, 568], [653, 527], [717, 478], [800, 435], [877, 409], [967, 384], [1067, 374], [1133, 373], [1200, 379], [1240, 389], [1273, 399], [1303, 411], [1340, 431], [1352, 443], [1348, 455], [1337, 460]];
const rimMiddle: Pt[] = [[562, 705], [567, 665], [580, 628], [604, 596], [640, 560], [690, 521], [750, 482], [833, 442], [920, 414], [983, 400], [1060, 392], [1133, 391], [1200, 396], [1273, 413], [1323, 434], [1358, 452], [1373, 463]];
const innerEdge: Pt[] = [[578, 727], [576, 700], [583, 658], [617, 602], [667, 550], [733, 503], [833, 454], [920, 426], [1033, 406], [1133, 405], [1240, 418], [1337, 460]];
const faceTop: Pt[] = [[568, 685], [577, 650], [593, 622], [620, 588], [652, 558], [690, 528], [733, 500], [783, 474], [833, 453], [877, 438], [920, 425], [975, 411], [1033, 404], [1090, 402], [1140, 403], [1200, 409], [1240, 415], [1273, 425], [1307, 440], [1337, 459]];
const faceBottom: Pt[] = [[1302, 723], [1273, 742], [1240, 759], [1190, 779], [1140, 796], [1083, 813], [983, 840], [930, 850], [883, 854], [833, 851], [783, 845], [733, 834], [690, 819], [657, 801], [627, 779], [600, 755], [582, 731], [572, 709], [568, 685]];
const wallOuter: Pt[] = [[568, 685], [561, 715], [563, 751], [573, 779], [590, 804], [613, 829], [650, 858], [700, 880], [783, 902], [850, 911], [900, 913], [960, 909], [1033, 892], [1133, 860], [1190, 839], [1240, 818], [1290, 795], [1328, 772], [1338, 760], [1340, 748], [1333, 733], [1302, 723]];
const wallLine1: Pt[] = [[582, 733], [594, 770], [625, 803], [667, 830], [750, 862], [833, 880], [900, 884], [983, 875], [1083, 851], [1167, 820], [1240, 787], [1290, 762], [1313, 747], [1320, 735], [1318, 725]];
const wallLine2: Pt[] = [[561, 724], [568, 762], [590, 795], [633, 829], [700, 861], [800, 890], [900, 900], [1000, 891], [1100, 861], [1167, 836], [1240, 802], [1328, 760], [1339, 748]];

const stockPlane = "M691 420L1395 373L1332 915L419 925Z";
const lowerTip = "M1222 659L1300 684C1325 690 1334 702 1336 712L1340 750L1302 723Z";
const body = curve(stockOuter) + "L1350 500L1168 561L1127 624L900 800L600 800Z";
const rim = curve(rimOuter) + "L1148 529L883 800L582 733Z";
const face = curve(faceTop) + "L1267 483L1253 490L1148 529L1105 560L1087 582C1075 592 1074 602 1083 618L1082 645C1084 651 1088 654 1093 655L1197 688L1302 723" + curve(faceBottom, "L") + "Z";
const wall = curve(wallOuter) + curve(faceBottom, "L") + "Z";
const wallLower = curve(wallOuter.slice(3, 20)) + curve([...wallLine1].reverse(), "L") + "Z";

const screwHoles = [
  { top: [703, 595, 14, 8], neck: [711, 622, 14, 8], cone: [714, 635, 29, 17] },
  { top: [1161, 442, 14, 7], neck: [1166, 469, 14, 7], cone: [1168, 482, 28, 15] },
  { top: [1126, 676, 15, 9], neck: [1131, 705, 16, 9], cone: [1134, 719, 32, 20] },
  { top: [1088, 733, 16, 10], neck: [1093, 761, 16, 10], cone: [1096, 775, 34, 21] },
];

const Oval: FC<{ at: number[]; fill?: string; stroke?: string }> = ({ at, fill = "none", stroke = "#1d6b3a" }) => (
  <ellipse cx={at[0]} cy={at[1]} rx={at[2]} ry={at[3]} transform={`rotate(-7 ${at[0]} ${at[1]})`} fill={fill} stroke={stroke} />
);

const Model = () => (
  <svg viewBox="0 159 1918 1025" className="absolute inset-0 h-full w-full" fill="none">
    <defs>
      <clipPath id="on-plane"><path d={stockPlane} /></clipPath>
      <linearGradient id="tool-fill" x1="1060" y1="460" x2="1132" y2="446" gradientUnits="userSpaceOnUse">
        <stop offset="0" stopColor="#12110f" />
        <stop offset=".35" stopColor="#27241f" />
        <stop offset=".55" stopColor="#1b1917" />
        <stop offset="1" stopColor="#171513" />
      </linearGradient>
      <linearGradient id="bore-fill" x1="940" y1="0" x2="1030" y2="0" gradientUnits="userSpaceOnUse">
        <stop offset="0" stopColor="#3a7a68" />
        <stop offset=".5" stopColor="#336e80" />
        <stop offset="1" stopColor="#3a7a68" />
      </linearGradient>
    </defs>
    <path d={body} fill="#6764b4" />
    <path d={stockPlane} fill="#6a68bc" />
    <g clipPath="url(#on-plane)" fill="#4440a8">
      <path d={body} />
      <path d={lowerTip} />
    </g>
    {/* the pocket between the arms shows the bare plane */}
    <path d="M1083 600L1148 529L1337 459L1374 472L1360 498L1168 561L1127 624Z" fill="#6a68bc" />
    <path d={rim} fill="#489a5a" />
    <path d={rim} fill="#277f54" clipPath="url(#on-plane)" />
    <path d={curve(rimOuter)} stroke="#1d4b50" />
    <path d={face} fill="#3aba34" stroke="#20702c" />
    <path d={curve(innerEdge)} stroke="#1f6b2c" />
    <path d={wall} fill="#537c8a" stroke="#35606a" />
    <path d={wallLower} fill="#4b7876" />
    <path d={curve(wallLine1)} stroke="#2d5064" />
    <path d={curve(wallLine2)} stroke="#2d5064" />
    <path d={curve(rimMiddle)} stroke="#1d5347" />
    <path d="M1311 722L1313 747M1327 760l2 12" stroke="#24424e" />

    {/* upper arm wall */}
    <path d="M1148 529L1253 490L1265 483L1337 459L1352 450L1372 464C1375 477 1372 490 1352 497L1240 537L1187 555L1168 561L1140 575Z" fill="#4f7b84" stroke="#2f5560" />
    <path d="M1352 441C1356 450 1350 456 1337 460L1345 458L1356 452L1373 470L1366 480Z" fill="#3f6f90" opacity=".4" />
    <path d="M1253 490L1257 518L1345 486M1265 484L1269 512M1257 518L1272 510L1340 488C1357 482 1360 468 1350 460L1337 459L1340 487M1345 486C1362 482 1372 474 1373 464M1352 486V498M1148 557L1166 551L1168 561M1350 440L1352 468" stroke="#24424e" />

    {/* lower arm wall */}
    <path d="M1083 580C1074 592 1072 604 1083 614L1106 618L1106 560Z" fill="#3f6f80" stroke="#2b4f66" />
    <path d="M1083 612L1127 624L1222 661L1303 688C1318 693 1321 706 1312 715L1302 723L1197 690L1093 657C1084 654 1081 645 1083 612Z" fill="#277f54" stroke="#1d5b50" />
    <path d="M1091 655L1200 688L1298 720" stroke="#3f8f68" strokeWidth="3" />
    <path d="M1093 617L1094 655M1222 662L1225 690L1310 716M1234 692L1231 664M1304 690L1306 714" stroke="#1d6a4c" />
    <path d="M1312 716L1334 733" stroke="#3c3a80" />

    {screwHoles.map(({ top, neck, cone }, i) => (
      <g key={i}>
        <path d={`M${top[0] - top[2]} ${top[1]}L${neck[0] - neck[2]} ${neck[1]}H${neck[0] + neck[2]}L${top[0] + top[2]} ${top[1]}Z`} fill="#36b036" />
        <Oval at={cone} fill="#479c5e" stroke="#2b7f45" />
        <Oval at={neck} stroke="#2b7f45" />
        <Oval at={top} fill="#37687f" />
      </g>
    ))}

    {/* centre bore */}
    <path d="M934 592L943 632C950 660 1034 656 1038 612L1030 578Z" fill="#2f9a48" />
    <Oval at={[990, 620, 48, 29]} fill="#2a8560" stroke="#1d6b5a" />
    <Oval at={[982, 586, 48, 29]} fill="url(#bore-fill)" stroke="#1d4b5a" />
    <path d="M946 609C970 593 1012 590 1027 598C1015 612 970 622 946 609Z" fill="#7a80ba" />
    <path d="M944 611C965 598 1015 592 1032 600L1037 618C1030 642 950 652 945 626Z" fill="#2a8560" />
    <path d="M934 592L943 628M1030 582L1038 614" stroke="#1d6b5a" />
    <path d="M968 593c0-10 32-12 33-1l5 24-34 4z" fill="#8e3a50" />
    <g stroke="#f02a35">
      <ellipse cx="984" cy="592" rx="16" ry="7" />
      <ellipse cx="985" cy="597" rx="16" ry="7" />
      <ellipse cx="986" cy="602" rx="17" ry="8" />
      <ellipse cx="987" cy="608" rx="17" ry="8" />
    </g>
    <ellipse cx="990" cy="618" rx="17" ry="10" fill="#8e6636" stroke="#3a20c0" strokeWidth="2" />
    <path d="M978 616c6-5 18-5 24 0M977 620c6-5 20-5 26 0M980 624c6-4 14-4 20 0" stroke="#c03a30" />
    <path d="M951 650l6 28h32l-6-28z" fill="#34a83c" />
    <Oval at={[963, 636, 15, 9]} fill="#3f3cb4" stroke="#3f3cb4" />
    <Oval at={[973, 678, 16, 9]} fill="#44a356" stroke="#2b7f45" />

    {/* work coordinate system */}
    <path d="M967 445L1063 441L1073 520L983 528Z" fill="#e09a20" opacity=".14" />
    <path d="M974 390L990 471L974 518L960 447Z" fill="#e8941e" opacity=".3" />
    <path d="M980 384L1075 373L1062 426L955 432Z" fill="#b8a832" opacity=".2" />
    <path d="M950 435L974 373" stroke="#d3222a" strokeWidth="2" strokeDasharray="14 3 5 3" />
    <path d="M955 434L1073 428" stroke="#12e61e" strokeWidth="4" strokeDasharray="40 4 10 4" />
    <path d="M951 439L973 541" stroke="#0d4f9e" strokeWidth="3" strokeDasharray="30 5 8 5" />
    <circle cx="950" cy="435" r="5" fill="#b8ecb8" stroke="#7fb77f" />

    {/* tool path */}
    <g stroke="#f2f21c" strokeWidth="1.5">
      <path d="M982 612L969 550L1213 498L1219 543" />
      <path d="M1140 548L1181 509L1189 555" strokeWidth="3" />
    </g>
    <path d="M1189 560L1218 552" stroke="#1d9a3a" strokeWidth="2" strokeDasharray="8 3" />
    <path d="M1186 552h6v7h-6z" fill="#1d9a3a" />
    <path d="M1179 563C1178 580 1170 592 1157 602M1179 563C1174 575 1168 585 1157 592M1179 563C1170 570 1162 577 1156 586M1179 563C1174 582 1170 588 1157 597M1179 563L1172 567" stroke="#2a24e0" strokeWidth="1.5" />

    {/* cutter */}
    <path d="M1049 337C1049 325 1063 316 1084 316C1100 316 1111 320 1112 327L1157 602C1152 619 1120 626 1101 616Z" fill="url(#tool-fill)" />
    <ellipse cx="1080" cy="332" rx="32" ry="14" transform="rotate(-9 1080 332)" fill="#2b2926" />
    <path d="M1062 374L1076 373L1066 412Z" fill="#4a3010" opacity=".6" />
    <g stroke="#e6e61c" strokeWidth="1.5">
      <path d="M1123 567C1116 567 1112 572 1111 577L1119 624M1116 570L1123 622M1119 568L1127 620M1113 573L1121 624" />
    </g>
    <path d="M1116 630h8M1120 626v5" stroke="#22b03a" strokeWidth="2" />
  </svg>
);

const ViewCube = () => (
  <svg viewBox="0 0 90 112" className="absolute top-[20px] right-[26px] h-28 w-[90px]" fill="none">
    <path d="M22 20L71 17L75 50L8 45Z" fill="#dcdcdc" />
    <path d="M7 45L71 42L71 88L22 88Z" fill="#e6e6e6" />
    <path d="M71 17L77 45L71 88" fill="#ededed" />
    <path d="M22 20L71 17V88H22M71 17L77 46L71 88" stroke="#bbb" strokeDasharray="6 4" />
    <path d="M7 45L24 14" stroke="#f59a9a" strokeWidth="2" />
    <path d="M7 45L76 41" stroke="#7be07b" strokeWidth="2" />
    <path d="M7 45L22 97" stroke="#8482ee" strokeWidth="2" />
    <g fontFamily="DejaVu Sans" fontSize="11" textAnchor="middle">
      <text x="25" y="14" fontSize="14" fill="#f59a9a">X</text>
      <text x="84" y="45" fontSize="14" fill="#8ee68e">Y</text>
      <text x="23" y="110" fontSize="14" fill="#8482ee">Z</text>
      <text transform="translate(40 66) rotate(180)" fontSize="10" fontWeight="700" fill="#999">LEFT</text>
      <text transform="translate(37 31) rotate(108)" fontSize="8" fill="#888">BOTTOM</text>
    </g>
  </svg>
);

/* outlined glyph: dark stroke below, white one on top */
const PlayGlyph: FC<{ d: string; width: string; box: string; circle?: number }> = ({ d, width, box, circle }) => (
  <svg viewBox={box} className={clsx("h-[22px]", width)} fill="none" strokeLinecap="round" strokeLinejoin="round">
    <path d={d} stroke="#3d4043" strokeWidth="6" />
    <path d={d} stroke="#fff" strokeWidth="3" />
    {circle && <circle cx={circle} cy="11" r="8" fill="#fff" stroke="#3d4043" strokeWidth="1.8" />}
  </svg>
);

const Player = () => (
  <div className="flex flex-col items-center">
    <div className="flex h-10 items-center gap-4 drop-shadow-md">
      <button aria-label="Go to start"><PlayGlyph box="0 0 21 22" width="w-[21px]" d="M3 4v14M17 4l-7 7 7 7" /></button>
      <button aria-label="Previous operation"><PlayGlyph box="0 0 32 22" width="w-8" d="M29 4l-7 7 7 7" circle={9} /></button>
      <button aria-label="Rewind" className="ml-1"><PlayGlyph box="0 0 26 22" width="w-[26px]" d="M11 4l-7 7 7 7M22 4l-7 7 7 7" /></button>
      <button aria-label="Play">
        <svg viewBox="0 0 22 38" className="h-[38px] w-[22px]">
          <path d="M2 3c0-2 2-2 3 0l15 14c1 1 1 3 0 4L5 35c-1 2-3 2-3 0z" fill="#fff" stroke="#3d4043" strokeWidth="1.8" />
        </svg>
      </button>
      <button aria-label="Fast forward" className="-ml-1"><PlayGlyph box="0 0 26 22" width="w-[26px]" d="M4 4l7 7-7 7M15 4l7 7-7 7" /></button>
      <button aria-label="Next operation" className="ml-1"><PlayGlyph box="0 0 32 22" width="w-8" d="M3 4l7 7-7 7" circle={22} /></button>
      <button aria-label="Go to end"><PlayGlyph box="0 0 21 22" width="w-[21px]" d="M4 4l7 7-7 7M18 4v14" /></button>
    </div>
    <div className="relative mt-2 flex h-[18px] w-[342px] items-center">
      <span className="absolute left-[218px] size-[18px] rounded-full border border-[#d5d5d5] bg-[#f6f6f6]" />
      <input
        type="range"
        aria-label="Playback speed"
        defaultValue={73}
        className="relative h-[18px] w-full appearance-none bg-transparent [&::-webkit-slider-runnable-track]:h-px [&::-webkit-slider-runnable-track]:bg-linear-to-r [&::-webkit-slider-runnable-track]:from-transparent [&::-webkit-slider-runnable-track]:via-[#777] [&::-webkit-slider-runnable-track]:to-transparent [&::-webkit-slider-thumb]:-mt-2 [&::-webkit-slider-thumb]:size-[17px] [&::-webkit-slider-thumb]:appearance-none [&::-webkit-slider-thumb]:rounded-full [&::-webkit-slider-thumb]:border-2 [&::-webkit-slider-thumb]:border-[#333] [&::-webkit-slider-thumb]:bg-white"
      />
      <span className="absolute left-[169px] h-2 w-0.5 bg-[#eee]" />
    </div>
  </div>
);

const navTools = [
  { name: "Orbit", caret: true, art: <><ellipse cx="9" cy="11" rx="8" ry="4" /><path d="M6 16c-4-6 0-15 4-15 5 0 6 5 3 7l-4 4" /><path d="M8 7h3v3H8z" fill="#3b7fc4" stroke="none" /></> },
  { name: "Look at", art: <><path d="M1 6h16v11H1z" fill="#c9ced6" /><path d="M4 9h10v5H4zM2 4l9-2 1 2M6 3l6-2" /></> },
  { name: "Pan", art: <path d="M6 17l-5-7c0-2 2-1 4 1L4 4c1-2 2-1 3 3l1-6c2-1 2 1 2 5l3-4c2 0 1 2 0 6l3-2c1 1 0 3-3 9l-1 2z" fill="#fff" /> },
  { name: "Zoom", art: <><circle cx="7" cy="7" r="6" fill="#e8f7f2" /><path d="M11 11l6 6" stroke="#444" strokeWidth="3" /><path d="M14 3h4M16 1v4M14 7h4" /></> },
  { name: "Fit", caret: true, art: <><circle cx="7" cy="7" r="6" fill="#f4f6f8" /><path d="M4 5h6v5H4z" /><path d="M11 11l6 6" stroke="#444" strokeWidth="3" /></> },
  { name: "Display settings", caret: true, art: <><path d="M1 2h16v11H1z" fill="#7db2e6" /><path d="M6 16h6M9 13v3" strokeWidth="2" /></> },
  { name: "Grid", caret: true, art: <><path d="M1 1h16v16H1z" fill="#c3c6ca" /><path d="M1 5h16M1 9h16M1 13h16M5 1v16M9 1v16M13 1v16" stroke="#888" /></> },
  { name: "Viewports", caret: true, art: <><path d="M1 6l5-5h12v12l-5 5H1z" fill="#f7f8fa" /><path d="M1 6h12v12H1z" fill="#8cb8df" /><path d="M13 6l5-5" /><circle cx="6" cy="12" r="3" fill="#dbe9f7" /></> },
];

const NavTools = () => (
  <div className="flex h-[26px] w-[263px] items-center justify-between bg-[#f2f2f2] px-[3px]">
    {navTools.map(tool => (
      <button key={tool.name} aria-label={tool.name} className="flex items-center gap-1">
        <svg viewBox="0 0 18 18" className="size-[17px]" fill="none" stroke="#6d7278">{tool.art}</svg>
        {tool.caret && <Caret className="w-[7px]" />}
      </button>
    ))}
  </div>
);

const App = () => (
  <div className="h-screen w-full bg-[#b48a5c] font-['DejaVu_Sans',sans-serif] text-[12px] text-[#3c3c3c]">
    <div className="flex h-full flex-col rounded-t-xl bg-[#544a46] pt-0.5 pr-0.5">
      <TitleBar />
      <QuickBar />
      <Ribbon />
      <main className="relative flex min-h-0 flex-1 justify-between bg-linear-to-t from-[#e9ece8] to-white to-[20px]">
        <Model />
        <ViewCube />
        <div className="absolute inset-x-0 bottom-1 flex flex-col items-center gap-4">
          <Player />
          <NavTools />
        </div>
        <div className="relative flex"><BrowserPanel /></div>
        <div className="relative flex"><SimulatePanel /></div>
        <span className="absolute right-4 bottom-[9px] flex size-4 justify-center rounded-full rounded-br-none bg-[#3a3a3a] pt-0.5 text-[10px] leading-[10px] font-bold text-white">A</span>
        <a href="#site" className="absolute right-[10px] bottom-0 font-['Liberation_Serif',serif] text-[14px] leading-[14px] text-black">www.mfgrobots.com</a>
      </main>
      <footer className="flex h-[3px] shrink-0 bg-[#6f9a5e]"><span className="ml-[1668px] w-1.5 bg-black" /></footer>
    </div>
  </div>
);

export default App;
